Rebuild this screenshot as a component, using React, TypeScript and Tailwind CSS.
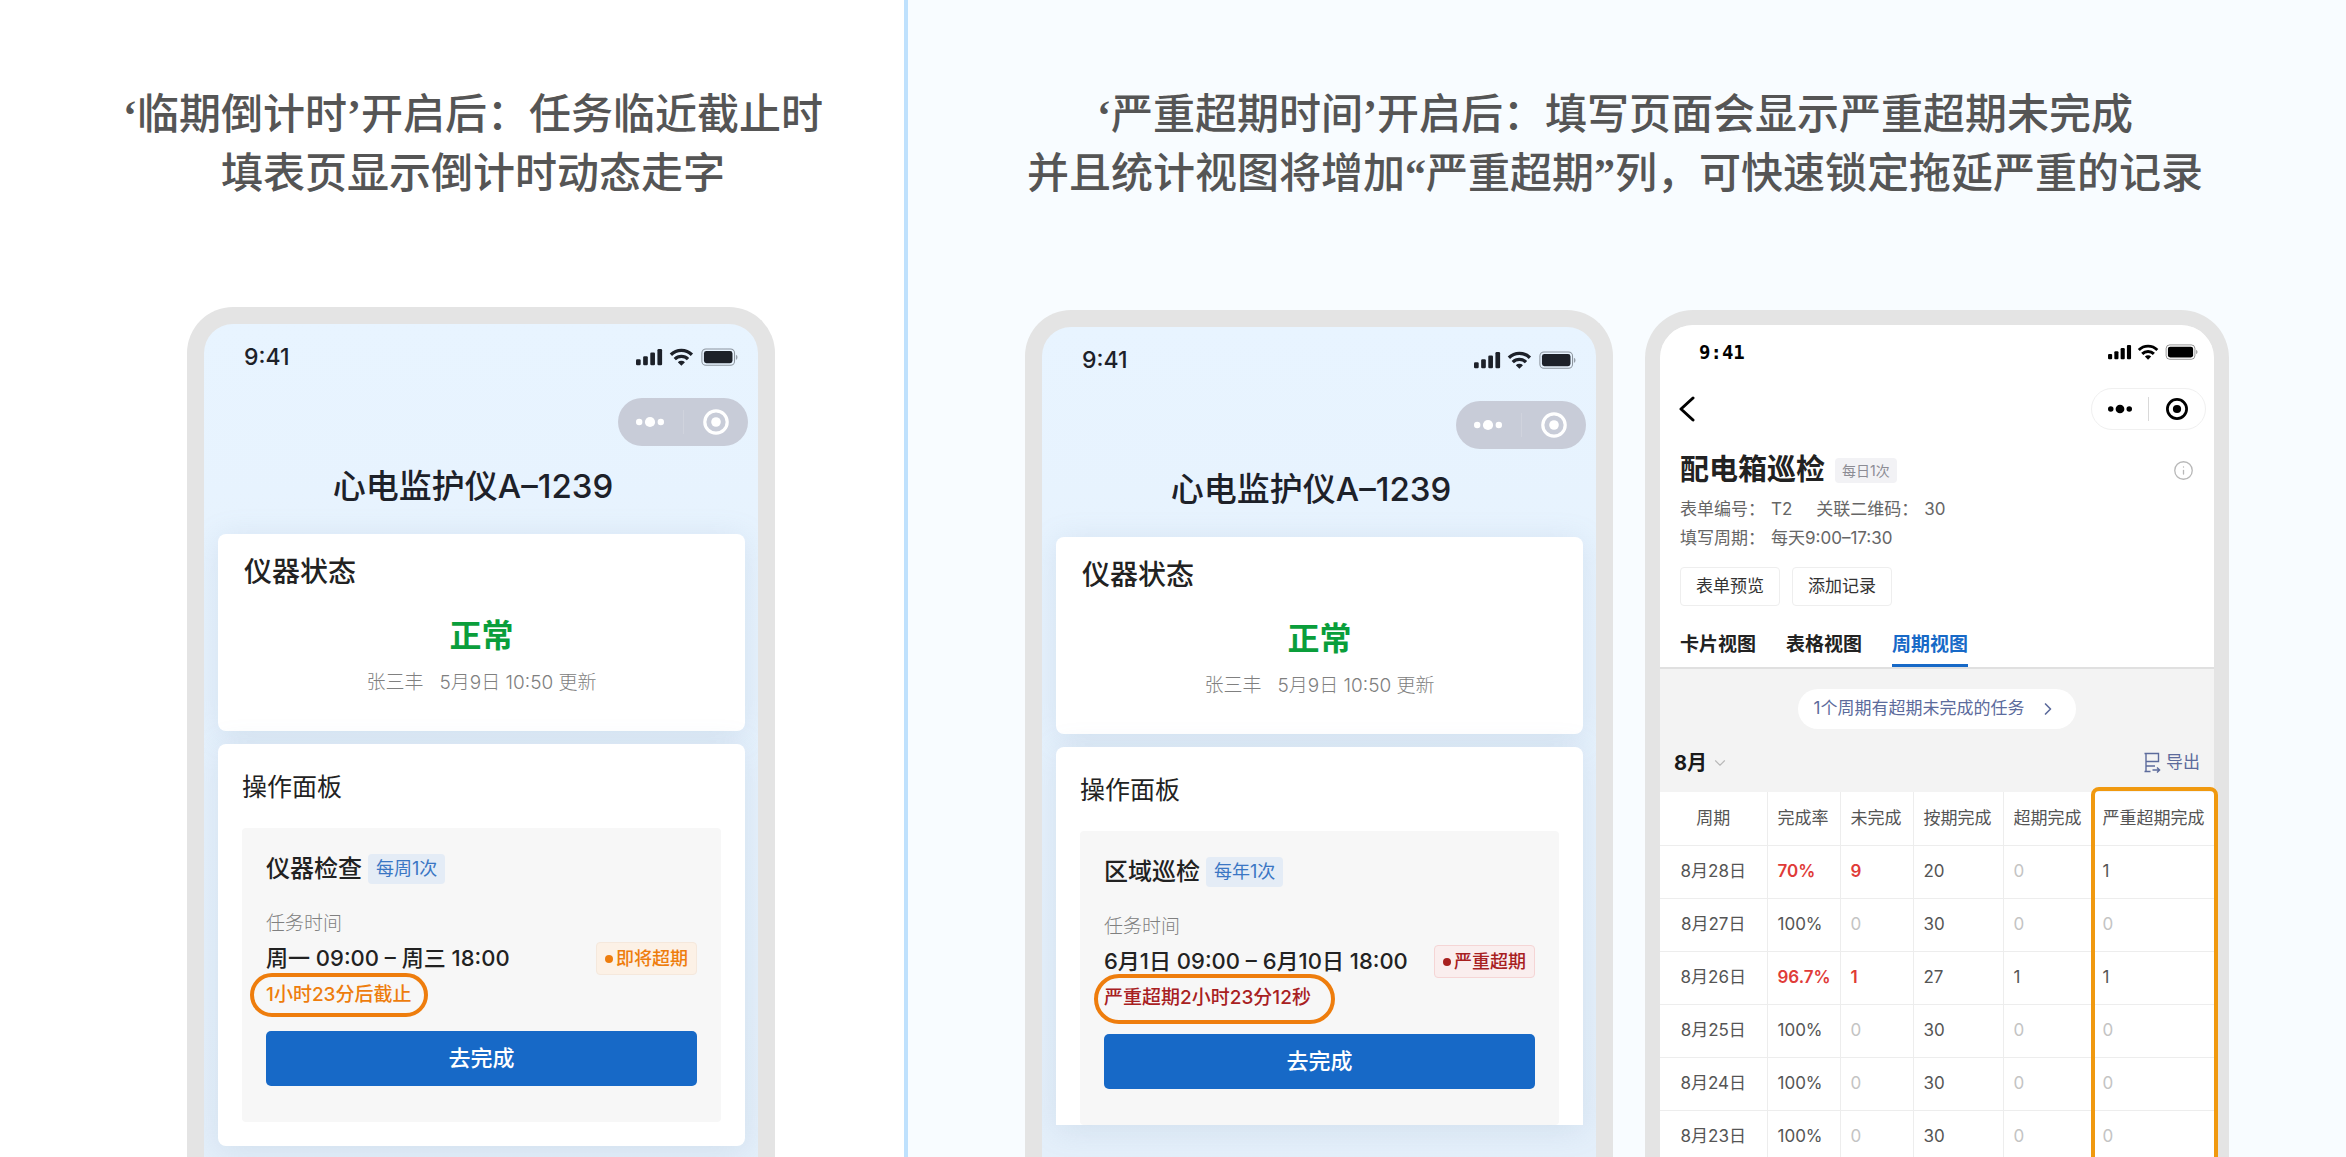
import clsx from "clsx";
import { ChevronDown, ChevronRight, Info } from "lucide-react";
import type { ReactNode } from "react";

interface TaskPhoneProps {
  task: string;
  cycle: string;
  period: string;
  status: string;
  countdown: string;
  severe?: boolean;
}

interface CycleRow {
  date: string;
  rate: string;
  missed: number;
  onTime: number;
  late: number;
  veryLate: number;
}

const rows: CycleRow[] = [
  { date: "8月28日", rate: "70%", missed: 9, onTime: 20, late: 0, veryLate: 1 },
  { date: "8月27日", rate: "100%", missed: 0, onTime: 30, late: 0, veryLate: 0 },
  { date: "8月26日", rate: "96.7%", missed: 1, onTime: 27, late: 1, veryLate: 1 },
  { date: "8月25日", rate: "100%", missed: 0, onTime: 30, late: 0, veryLate: 0 },
  { date: "8月24日", rate: "100%", missed: 0, onTime: 30, late: 0, veryLate: 0 },
  { date: "8月23日", rate: "100%", missed: 0, onTime: 30, late: 0, veryLate: 0 },
];

const headers = ["完成率", "未完成", "按期完成", "超期完成", "严重超期完成"];
const tabs = ["卡片视图", "表格视图", "周期视图"];

function StatusIcons({ className }: { className: string }) {
  return (
    <svg viewBox="0 0 100 18" className={className} fill="currentColor" aria-hidden="true">
      <rect x="0" y="11" width="4.6" height="6" rx="1.2" />
      <rect x="7" y="8" width="4.6" height="9" rx="1.2" />
      <rect x="14" y="4.5" width="4.6" height="12.5" rx="1.2" />
      <rect x="21" y="1" width="4.6" height="16" rx="1.2" />
      <g fill="none" stroke="currentColor" strokeWidth="3.2">
        <path d="M34.2 6.6A14.6 14.6 0 0 1 54.8 6.6" />
        <path d="M38 11A9.2 9.2 0 0 1 51 11" />
      </g>
      <path d="M41 14A5 5 0 0 1 48 14L44.5 17.5Z" />
      <rect x="64.6" y="1" width="32" height="16" rx="4" fill="none" stroke="currentColor" strokeOpacity=".45" />
      <rect x="66.6" y="3" width="28" height="12" rx="2.4" />
      <path d="M98 6.5c2 .8 2 4.2 0 5z" opacity=".4" />
    </svg>
  );
}

function Capsule({ className, iconClass }: { className: string; iconClass: string }) {
  return (
    <div className={clsx("flex items-center rounded-full", className)}>
      <button className="flex flex-1 justify-center" aria-label="更多">
        <svg className={iconClass} viewBox="0 0 28 28" fill="currentColor">
          <circle cx="3.2" cy="14" r="3.2" />
          <circle cx="14" cy="14" r="5.1" />
          <circle cx="24.8" cy="14" r="3.2" />
        </svg>
      </button>
      <span className="h-6 w-px bg-current opacity-15" />
      <button className="flex flex-1 justify-center" aria-label="关闭">
        <svg className={iconClass} viewBox="0 0 28 28">
          <circle cx="14" cy="14" r="11.2" fill="none" stroke="currentColor" strokeWidth="3.2" />
          <circle cx="14" cy="14" r="4.8" fill="currentColor" />
        </svg>
      </button>
    </div>
  );
}

function Quote({ children }: { children: ReactNode }) {
  return <span className="font-['Liberation_Serif',serif] leading-none font-bold">{children}</span>;
}

function Headline({ children, className }: { children: ReactNode; className?: string }) {
  return (
    <h2
      className={clsx(
        "text-center text-[42px] leading-[59px] font-medium whitespace-nowrap text-[#555555]",
        className
      )}
    >
      {children}
    </h2>
  );
}

function TaskPhone({ task, cycle, period, status, countdown, severe }: TaskPhoneProps) {
  return (
    <div className="min-w-0 flex-1 overflow-hidden rounded-t-[46px] border-[17px] border-b-0 border-[#e4e4e4] bg-linear-to-b from-[#e8f4ff] to-[#e4effa]">
      <div className="flex h-[66px] items-center justify-between pr-5 pl-10 text-[#1d2129]">
        <span className="text-[23px] font-medium">9:41</span>
        <StatusIcons className="w-[102px]" />
      </div>
      <div className="mt-2 mr-[10px] flex justify-end">
        <Capsule className="h-12 w-[130px] bg-[#c8ccd8] text-white" iconClass="size-7" />
      </div>
      <h3 className="mt-5 pr-4 text-center text-[33px] leading-10 font-medium text-[#1d2129]">
        心电监护仪A–1239
      </h3>

      <div className="mt-7 mr-[13px] ml-[14px] flex flex-col gap-[13px]">
        <section className="rounded-lg bg-white px-[26px] pt-5 pb-[34px] shadow-[0_4px_30px_rgba(120,150,180,0.18)]">
          <h4 className="text-[28px] leading-9 font-medium text-[#222222]">仪器状态</h4>
          <p className="mt-[26px] text-center text-[32px] leading-10 font-bold text-[#0a9e3b]">正常</p>
          <p className="mt-[13px] flex justify-center gap-4 text-[19px] leading-7 font-light text-[#808080]">
            <span>张三丰</span>
            <span>5月9日 10:50 更新</span>
          </p>
        </section>

        <section
          className={clsx(
            "bg-white px-6 pt-[27px] shadow-[0_4px_30px_rgba(120,150,180,0.18)]",
            severe ? "rounded-t-lg" : "rounded-lg pb-6"
          )}
        >
          <h4 className="text-[25px] leading-8 text-[#222222]">操作面板</h4>
          <div className="mt-[25px] rounded-sm bg-[#f7f7f7] px-6 pt-[26px] pb-9">
            <div className="flex h-[30px] items-center gap-[6px]">
              <h5 className="text-2xl font-medium text-[#222222]">{task}</h5>
              <span className="rounded-sm bg-[#e4ecf6] px-2 text-lg leading-[30px] text-[#3a76c4]">{cycle}</span>
            </div>
            <p className="mt-[26px] text-[19px] leading-7 font-light text-[#808080]">任务时间</p>
            <div className="mt-1 flex h-[33px] items-center justify-between">
              <span className="text-[22px] font-medium whitespace-nowrap text-[#222222]">{period}</span>
              <span
                className={clsx(
                  "flex h-[33px] items-center gap-[3px] rounded border px-2 text-lg font-medium whitespace-nowrap",
                  severe
                    ? "border-[#f5d5d5] bg-[#faeeee] text-[#a8201f]"
                    : "border-[#f5e8dc] bg-[#fcf1e6] text-[#ee7d0d]"
                )}
              >
                <span className="size-2 rounded-full bg-current" />
                {status}
              </span>
            </div>
            <p
              className={clsx(
                "relative mt-[6px] w-fit text-[19px] leading-7 font-medium",
                severe ? "text-[#a8201f]" : "text-[#ee7d0d]"
              )}
            >
              {countdown}
              <span
                className={clsx(
                  "absolute border-[4px] border-[#ee7d0d]",
                  severe
                    ? "-top-[10px] -right-6 -bottom-3 -left-[10px] rounded-[25px]"
                    : "-inset-x-4 -inset-y-2 rounded-full"
                )}
              />
            </p>
            <button className="mt-[22px] h-[55px] w-full rounded-[5px] bg-[#1769c7] text-[22px] font-medium text-white">
              去完成
            </button>
          </div>
        </section>
      </div>
    </div>
  );
}

function Count({ value, alert }: { value: number; alert?: boolean }) {
  return (
    <span className={clsx(value === 0 && "text-[#c4c4c4]", value > 0 && alert && "font-semibold text-[#e03b38]")}>
      {value}
    </span>
  );
}

function CycleTable() {
  return (
    <div className="relative">
      <table className="w-full table-fixed border-collapse bg-white text-left text-[17px] whitespace-nowrap text-[#555555]">
        <colgroup>
          <col className="w-[107px]" />
          <col className="w-[73px]" />
          <col className="w-[73px]" />
          <col className="w-[90px]" />
          <col className="w-[89px]" />
          <col className="w-[122px]" />
        </colgroup>
        <thead>
          <tr className="h-[53px] border-b border-[#ededed]">
            <th className="border-r border-[#ededed] text-center font-normal">周期</th>
            {headers.map((header) => (
              <th key={header} className="border-r border-[#ededed] pl-[10px] font-normal last:border-r-0">
                {header}
              </th>
            ))}
          </tr>
        </thead>
        <tbody>
          {rows.map((row) => (
            <tr key={row.date} className="h-[53px] border-b border-[#ededed]">
              <td className="border-r border-[#ededed] text-center">{row.date}</td>
              <td
                className={clsx(
                  "border-r border-[#ededed] pl-[10px]",
                  row.missed > 0 && "font-semibold text-[#e03b38]"
                )}
              >
                {row.rate}
              </td>
              <td className="border-r border-[#ededed] pl-[10px]">
                <Count value={row.missed} alert />
              </td>
              <td className="border-r border-[#ededed] pl-[10px]">
                <Count value={row.onTime} />
              </td>
              <td className="border-r border-[#ededed] pl-[10px]">
                <Count value={row.late} />
              </td>
              <td className="pl-[10px]">
                <Count value={row.veryLate} />
              </td>
            </tr>
          ))}
        </tbody>
      </table>
      <div className="absolute -top-[5px] -right-1 -bottom-4 w-[127px] rounded-lg border-[4px] border-[#f0990f]" />
    </div>
  );
}

function StatsPhone() {
  return (
    <div className="min-w-0 flex-1 rounded-t-[48px] border-[15px] border-b-0 border-[#e4e4e4] bg-[#f3f3f3]">
      <div className="rounded-t-[33px] border-b-2 border-[#e0e0e0] bg-white">
        <div className="flex h-[54px] items-center justify-between pr-4 pl-[39px] text-black">
          <span className="font-['DejaVu_Sans_Mono',monospace] text-[19px] font-bold">9:41</span>
          <StatusIcons className="w-[90px]" />
        </div>
        <div className="mt-[9px] flex items-center justify-between pr-2 pl-[18px] text-black">
          <button aria-label="返回">
            <svg width="18" height="26" viewBox="0 0 18 26" fill="none" stroke="currentColor" strokeWidth="3">
              <path d="M15 2L3 13L15 24" strokeLinecap="round" strokeLinejoin="round" />
            </svg>
          </button>
          <Capsule className="h-[42px] w-[115px] border border-[#f0f0f0]" iconClass="size-6" />
        </div>

        <div className="px-5">
          <div className="mt-[22px] flex items-center gap-[10px]">
            <h3 className="text-[29px] leading-9 font-bold text-[#222222]">配电箱巡检</h3>
            <span className="rounded-sm bg-[#f2f2f5] px-[7px] text-sm leading-[25px] text-[#8c8c94]">每日1次</span>
            <button className="ml-auto text-[#b8b8b8]" aria-label="说明">
              <Info className="size-[21px]" strokeWidth={1.5} />
            </button>
          </div>
          <p className="mt-[7px] flex gap-6 text-[17px] leading-[29px] text-[#666666]">
            <span className="flex gap-[6px]">
              <span>表单编号：</span>T2
            </span>
            <span className="flex gap-[6px]">
              <span>关联二维码：</span>30
            </span>
          </p>
          <p className="flex gap-[6px] text-[17px] leading-[29px] text-[#666666]">
            <span>填写周期：</span>每天9:00–17:30
          </p>
          <div className="mt-[14px] flex gap-3 text-[17px] text-[#333333]">
            <button className="h-[39px] w-[100px] rounded border border-[#eeeeee]">表单预览</button>
            <button className="h-[39px] w-[100px] rounded border border-[#eeeeee]">添加记录</button>
          </div>
          <div className="mt-[17px] flex gap-[30px]" role="tablist">
            {tabs.map((tab, index) => (
              <button
                key={tab}
                role="tab"
                aria-selected={index === 2}
                className={clsx(
                  "h-11 border-b-[3px] pt-1 text-[19px] font-bold",
                  index === 2 ? "border-[#1769c7] text-[#1769c7]" : "border-transparent text-[#222222]"
                )}
              >
                {tab}
              </button>
            ))}
          </div>
        </div>
      </div>

      <button className="mx-auto mt-5 flex h-10 items-center rounded-full bg-white pr-[18px] pl-4 text-[17px] text-[#5c6b9c]">
        1个周期有超期未完成的任务
        <ChevronRight className="ml-[14px] size-5" />
      </button>
      <div className="flex h-[63px] items-center justify-between px-[14px] pt-1">
        <button className="flex items-center gap-1 text-xl font-bold text-[#1a1a1a]">
          8月
          <ChevronDown className="size-[18px] text-[#b8b8b8]" strokeWidth={1.5} />
        </button>
        <button className="flex items-center gap-[5px] text-[17px] text-[#5c6b9c]">
          <svg width="18" height="21" viewBox="0 0 18 21" fill="none" stroke="currentColor" strokeWidth="1.4">
            <path d="M1.5 1.5h14v8H3M3 1.5v18M3 14h9M1.5 19.5h6M9.5 18h7M14 15.5l2.6 2.5l-2.6 2.5" />
          </svg>
          导出
        </button>
      </div>
      <CycleTable />
    </div>
  );
}

export default function App() {
  return (
    <main className="grid h-screen grid-cols-[904fr_1442fr] overflow-hidden bg-white font-['Inter','Noto_Sans_CJK_SC',sans-serif]">
      <section className="flex min-w-0 flex-col pt-[84px] pr-[129px] pl-[187px]">
        <Headline className="-mx-16 pr-4">
          <Quote>‘</Quote>临期倒计时<Quote>’</Quote>开启后：任务临近截止时
          <br />
          填表页显示倒计时动态走字
        </Headline>
        <div className="mt-[105px] flex min-h-0 flex-1">
          <TaskPhone
            task="仪器检查"
            cycle="每周1次"
            period="周一 09:00 – 周三 18:00"
            status="即将超期"
            countdown="1小时23分后截止"
          />
        </div>
      </section>

      <section className="flex min-w-0 flex-col border-l-4 border-[#bfe1fd] bg-[#f8fcff] px-[117px] pt-[84px]">
        <Headline className="-mx-6 pr-6">
          <Quote>‘</Quote>严重超期时间<Quote>’</Quote>开启后：填写页面会显示严重超期未完成
          <br />
          并且统计视图将增加<Quote>“</Quote>严重超期<Quote>”</Quote>列，可快速锁定拖延严重的记录
        </Headline>
        <div className="mt-[108px] grid min-h-0 flex-1 grid-cols-[588fr_584fr] gap-8">
          <TaskPhone
            task="区域巡检"
            cycle="每年1次"
            period="6月1日 09:00 – 6月10日 18:00"
            status="严重超期"
            countdown="严重超期2小时23分12秒"
            severe
          />
          <StatsPhone />
        </div>
      </section>
    </main>
  );
}
